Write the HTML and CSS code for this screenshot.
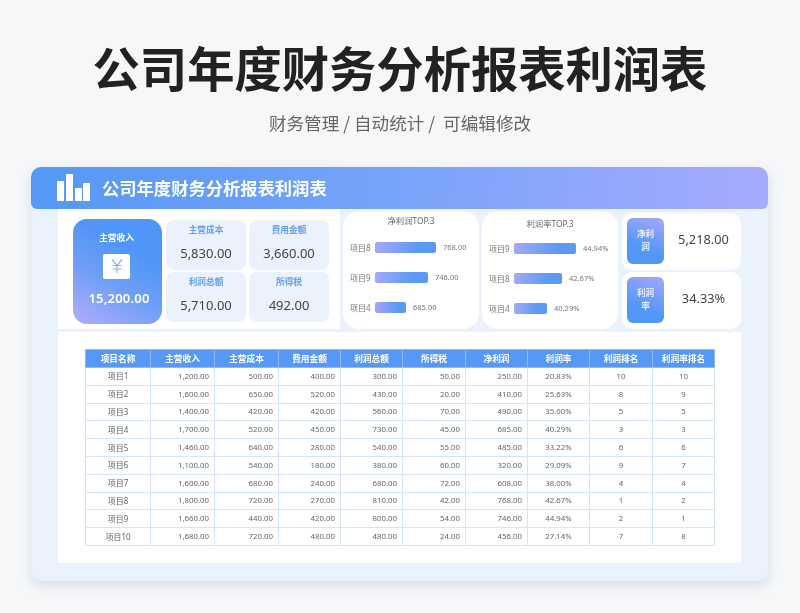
FILE: index.html
```html
<!DOCTYPE html>
<html lang="zh-CN">
<head>
<meta charset="utf-8">
<title>公司年度财务分析报表利润表</title>
<link rel="stylesheet" href="styles.css">
</head>
<body>
<header class="hero">
  <h1>公司年度财务分析报表利润表</h1>
  <p>财务管理 / 自动统计 /&nbsp; 可编辑修改</p>
</header>
<main class="sheet">
  <div class="sheet-head">
    <svg class="logo" viewBox="0 0 33 27" width="33" height="27"><path fill="#fff" d="M0 8a1 1 0 0 1 1-1h5a1 1 0 0 1 1 1v19H0zM9 1a1 1 0 0 1 1-1h5a1 1 0 0 1 1 1v26H9zM18 15a1 1 0 0 1 1-1h5a1 1 0 0 1 1 1v12h-7zM26 10a1 1 0 0 1 1-1h5a1 1 0 0 1 1 1v17h-7z"/></svg>
    <h2>公司年度财务分析报表利润表</h2>
  </div>
  <div class="sheet-body">
    <section class="top">
      <div class="kpis">
        <div class="tile">
          <div class="tile-label">主营收入</div>
          <div class="yen">
            <svg viewBox="0 0 14 16" width="14" height="16"><path fill="none" stroke="#8fb2ec" stroke-width="1.2" d="M2 1.5 7 7.5 12 1.5M7 7.5V15M2.5 7.5h9M2.5 11h9"/></svg>
          </div>
          <div class="tile-value">15,200.00</div>
        </div>
        <div class="minis">
          <div class="mini"><span>主营成本</span><b>5,830.00</b></div>
          <div class="mini"><span>费用金额</span><b>3,660.00</b></div>
          <div class="mini"><span>利润总额</span><b>5,710.00</b></div>
          <div class="mini"><span>所得税</span><b>492.00</b></div>
        </div>
      </div>
      <div class="chart">
        <h3>净利润TOP.3</h3>
        <div class="row"><span>项目8</span><i class="bar b61"></i><em>768.00</em></div>
        <div class="row"><span>项目9</span><i class="bar b53"></i><em>746.00</em></div>
        <div class="row"><span>项目4</span><i class="bar b31"></i><em>685.00</em></div>
      </div>
      <div class="chart chart-low">
        <h3>利润率TOP.3</h3>
        <div class="row"><span>项目9</span><i class="bar b62"></i><em>44.94%</em></div>
        <div class="row"><span>项目8</span><i class="bar b48"></i><em>42.67%</em></div>
        <div class="row"><span>项目4</span><i class="bar b33"></i><em>40.29%</em></div>
      </div>
      <div class="sides">
        <div class="side"><div class="badge">净利润</div><b>5,218.00</b></div>
        <div class="side"><div class="badge">利润率</div><b>34.33%</b></div>
      </div>
    </section>
    <section class="panel">
      <table>
        <thead>
          <tr><th>项目名称</th><th>主营收入</th><th>主营成本</th><th>费用金额</th><th>利润总额</th><th>所得税</th><th>净利润</th><th>利润率</th><th>利润排名</th><th>利润率排名</th></tr>
        </thead>
        <tbody>
          <tr><td>项目1</td><td>1,200.00</td><td>500.00</td><td>400.00</td><td>300.00</td><td>50.00</td><td>250.00</td><td>20.83%</td><td>10</td><td>10</td></tr>
          <tr><td>项目2</td><td>1,600.00</td><td>650.00</td><td>520.00</td><td>430.00</td><td>20.00</td><td>410.00</td><td>25.63%</td><td>8</td><td>9</td></tr>
          <tr><td>项目3</td><td>1,400.00</td><td>420.00</td><td>420.00</td><td>560.00</td><td>70.00</td><td>490.00</td><td>35.00%</td><td>5</td><td>5</td></tr>
          <tr><td>项目4</td><td>1,700.00</td><td>520.00</td><td>450.00</td><td>730.00</td><td>45.00</td><td>685.00</td><td>40.29%</td><td>3</td><td>3</td></tr>
          <tr><td>项目5</td><td>1,460.00</td><td>640.00</td><td>280.00</td><td>540.00</td><td>55.00</td><td>485.00</td><td>33.22%</td><td>6</td><td>6</td></tr>
          <tr><td>项目6</td><td>1,100.00</td><td>540.00</td><td>180.00</td><td>380.00</td><td>60.00</td><td>320.00</td><td>29.09%</td><td>9</td><td>7</td></tr>
          <tr><td>项目7</td><td>1,600.00</td><td>680.00</td><td>240.00</td><td>680.00</td><td>72.00</td><td>608.00</td><td>38.00%</td><td>4</td><td>4</td></tr>
          <tr><td>项目8</td><td>1,800.00</td><td>720.00</td><td>270.00</td><td>810.00</td><td>42.00</td><td>768.00</td><td>42.67%</td><td>1</td><td>2</td></tr>
          <tr><td>项目9</td><td>1,660.00</td><td>440.00</td><td>420.00</td><td>800.00</td><td>54.00</td><td>746.00</td><td>44.94%</td><td>2</td><td>1</td></tr>
          <tr><td>项目10</td><td>1,680.00</td><td>720.00</td><td>480.00</td><td>480.00</td><td>24.00</td><td>456.00</td><td>27.14%</td><td>7</td><td>8</td></tr>
        </tbody>
      </table>
    </section>
  </div>
</main>
</body>
</html>
```
FILE: styles.css
```css
* { box-sizing: border-box; }
html, body { margin: 0; height: 613px; overflow: hidden; }
body {
  background: #f5f7f9;
  font-family: "Noto Sans", "Noto Sans CJK SC", sans-serif;
  color: #555;
}
.hero { height: 167px; padding-top: 33px; text-align: center; filter: blur(.3px); }
.hero h1 {
  margin: 0;
  font: 700 47.3px/68px "Noto Sans CJK SC", sans-serif;
  color: #222;
}
.hero p {
  margin: 8px 0 0;
  font: 400 17.6px/28px "Noto Sans CJK SC", sans-serif;
  color: #666;
}
.sheet {
  width: 737px;
  height: 414px;
  margin-left: 31px;
  background: #eaf2fd;
  border-radius: 10px;
  box-shadow: 0 4px 12px rgba(90, 100, 120, .18);
  filter: blur(.3px);
}
.sheet-head {
  height: 42px;
  padding: 7px 0 0 26px;
  display: flex;
  gap: 12px;
  border-radius: 10px 10px 6px 6px;
  background: linear-gradient(95deg, #5598f6 0%, #78a4f9 50%, #a6abfd 100%);
}
.sheet-head h2 {
  margin: 0;
  font: 700 17.3px/28px "Noto Sans CJK SC", sans-serif;
  color: #fff;
}
.sheet-body { padding: 0 27px; }
.top { height: 123px; display: flex; }
.kpis {
  width: 282px;
  height: 120px;
  padding: 10px 11px 0 15px;
  display: flex;
  gap: 4px;
  background: #fff;
}
.tile {
  width: 89px;
  height: 105px;
  border-radius: 14px;
  text-align: center;
  color: #fff;
  background: linear-gradient(210deg, #4f96f6 30%, #6f9ff6 60%, #b3adf9 100%);
}
.tile-label { margin-top: 12px; padding-right: 2px; font-size: 8.7px; line-height: 14px; font-weight: 700; }
.yen {
  width: 27px;
  height: 25px;
  margin: 9px 0 0 30px;
  padding-top: 4px;
  border-radius: 2px;
  background: #fff;
  display: flex;
  justify-content: center;
}
.tile-value { margin-top: 9px; padding-left: 3px; font-size: 13px; line-height: 20px; font-weight: 600; letter-spacing: .2px; }
.minis {
  width: 163px;
  display: grid;
  grid-template-columns: 80px 80px;
  grid-template-rows: 50px 50px;
  gap: 2px 3px;
  margin-top: 1px;
}
.mini {
  border-radius: 8px;
  background: #ebf2fd;
  text-align: center;
  display: flex;
  flex-direction: column;
}
.mini span { margin-top: 3px; font-size: 8.7px; line-height: 14px; font-weight: 700; color: #66a0f2; }
.mini b { margin-top: 6px; font-size: 13px; line-height: 20px; font-weight: 400; color: #444; }
.chart {
  width: 136px;
  height: 118px;
  margin: 2px 0 0 3px;
  padding: 3px 0 0 7px;
  border-radius: 16px;
  background: #fff;
}
.chart h3 {
  margin: 0 0 4px;
  padding-right: 7px;
  text-align: center;
  font-size: 8.4px;
  line-height: 14px;
  font-weight: 400;
  color: #666;
}
.chart-low { padding-top: 6px; }
.chart-low h3 { margin-bottom: 2px; }
.row { height: 30px; display: flex; align-items: center; font-size: 7.5px; color: #777; }
.row span { width: 25px; flex: none; font-size: 8px; }
.row em { margin-left: 7px; font-style: normal; }
.bar {
  height: 11px;
  flex: none;
  border-radius: 2px;
  background: linear-gradient(100deg, #a6a9fa 0%, #5a9af5 70%);
}
.b61 { width: 61px; }
.b53 { width: 53px; }
.b31 { width: 31px; }
.b62 { width: 62px; }
.b48 { width: 48px; }
.b33 { width: 33px; }
.sides { width: 119px; margin: 4px 0 0 4px; display: flex; flex-direction: column; gap: 2px; }
.side {
  height: 57px;
  padding: 5px 0 0 5px;
  display: flex;
  border-radius: 10px;
  background: #fff;
}
.badge {
  width: 37px;
  height: 46px;
  padding: 0 6px;
  display: flex;
  align-items: center;
  justify-content: center;
  text-align: center;
  font-size: 8.6px;
  line-height: 13px;
  font-weight: 700;
  color: #e8eefe;
  border-radius: 6px;
  background: linear-gradient(20deg, #5298f6 35%, #a4a8fa 100%);
}
.side b {
  flex: 1;
  padding: 9px 0 0 2px;
  text-align: center;
  font-size: 12.8px;
  line-height: 24px;
  font-weight: 400;
  color: #444;
}
.panel { height: 231px; padding: 17px 27px 0; background: #fff; }
table {
  width: 629px;
  table-layout: fixed;
  border-collapse: collapse;
  font-size: 7.8px;
  color: #666;
}
th {
  width: 62px;
  height: 18px;
  padding: 0;
  font-size: 8.7px;
  font-weight: 700;
  color: #fff;
  background: #5598f6;
  border: 1px solid #8fb8f5;
}
td {
  height: 17.8px;
  padding: 0 5px 1px 0;
  text-align: right;
  border: 1px solid #d3e4fb;
}
th:first-child { width: 65px; }
th:nth-child(2), th:nth-child(3) { width: 64px; }
th:nth-child(6), th:nth-child(9) { width: 63px; }
td:first-child, td:nth-child(8), td:nth-child(9), td:nth-child(10) { padding: 0 0 1px; text-align: center; }
td:first-child { font-size: 8px; }
```
